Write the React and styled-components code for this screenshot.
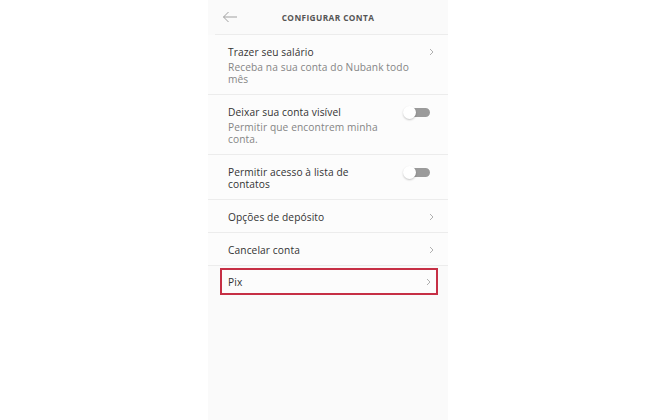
import React from 'react'
import styled, { createGlobalStyle } from 'styled-components'

const Global = createGlobalStyle`
  html, body { margin: 0; padding: 0; background: #fff; }
  body { font-family: "Open Sans", Lato, sans-serif; }
`

const rows = [
  { title: 'Trazer seu salário', sub: 'Receba na sua conta do Nubank todo mês', kind: 'chevron' },
  { title: 'Deixar sua conta visível', sub: 'Permitir que encontrem minha conta.', kind: 'toggle' },
  { title: 'Permitir acesso à lista de contatos', kind: 'toggle' },
  { title: 'Opções de depósito', kind: 'chevron' },
  { title: 'Cancelar conta', kind: 'chevron' },
  { title: 'Pix', kind: 'chevron', highlight: true },
]

function App() {
  return (
    <>
      <Global />
      <Page>
        <Phone>
          <Header>
            <Back>
              <svg width="16" height="12" viewBox="0 0 16 12">
                <path d="M15 6H1.5M6.5 1L1.5 6l5 5" fill="none" stroke="#a0a0a0" strokeWidth="1" />
              </svg>
            </Back>
            <Title>CONFIGURAR CONTA</Title>
          </Header>
          <List>
            {rows.map(r => (
              <Row key={r.title} $hl={r.highlight}>
                <Texts>
                  <RowTitle>{r.title}</RowTitle>
                  {r.sub && <RowSub>{r.sub}</RowSub>}
                </Texts>
                {r.kind === 'chevron' ? (
                  <Chevron>
                    <svg width="5" height="8" viewBox="0 0 5 8">
                      <path d="M1 1l3 3-3 3" fill="none" stroke="#b0b0b0" strokeWidth="1" />
                    </svg>
                  </Chevron>
                ) : (
                  <Toggle><Knob /></Toggle>
                )}
              </Row>
            ))}
          </List>
        </Phone>
      </Page>
    </>
  )
}

export default App

const Page = styled.div`
  width: 660px;
  height: 420px;
  display: flex;
  justify-content: center;
  overflow: hidden;
`

const Phone = styled.div`
  width: 240px;
  margin-left: -4px;
  height: 420px;
  background: #fafafa;
  display: flex;
  flex-direction: column;
`

const Header = styled.div`
  height: 34px;
  margin-left: 7px;
  border-bottom: 1px solid #ececec;
  display: flex;
  align-items: center;
  position: relative;
`

const Back = styled.div`
  position: absolute;
  left: 7px;
  top: 11px;
  display: flex;
`

const Title = styled.div`
  flex: 1;
  text-align: center;
  font-size: 8.3px;
  font-weight: 700;
  letter-spacing: 0.4px;
  color: #555;
  margin-left: -7px;
`

const List = styled.div`
  display: flex;
  flex-direction: column;
`

const Row = styled.div`
  display: flex;
  align-items: flex-start;
  gap: 16px;
  padding: ${p => (p.$hl ? '6px 5px 5px 6px' : '11px 14px 9px 20px')};
  margin: ${p => (p.$hl ? '2px 10px 0 12px' : '0')};
  border-bottom: 1px solid #ececec;
  border: ${p => (p.$hl ? '2px solid #c62f45' : undefined)};
  background: #fcfcfc;
`

const Texts = styled.div`
  flex: 1;
  min-width: 0;
  display: flex;
  flex-direction: column;
`

const RowTitle = styled.div`
  font-size: 10.2px;
  line-height: 12px;
  letter-spacing: 0.1px;
  color: #333;
`

const RowSub = styled.div`
  margin-top: 4px;
  font-size: 10.2px;
  line-height: 11.5px;
  letter-spacing: 0.1px;
  color: #858585;
`

const Chevron = styled.div`
  display: flex;
  padding-top: 2px;
`

const Toggle = styled.div`
  position: relative;
  width: 25px;
  height: 9px;
  margin-top: 2px;
  margin-right: 4px;
  padding-left: 2px;
  border-radius: 5px;
  background: #9b9b9b;
  background-clip: content-box;
`

const Knob = styled.div`
  position: absolute;
  left: 0;
  top: -2px;
  width: 13px;
  height: 13px;
  border-radius: 50%;
  background: #fff;
  box-shadow: 0 1px 2px rgba(0,0,0,0.22);
`
